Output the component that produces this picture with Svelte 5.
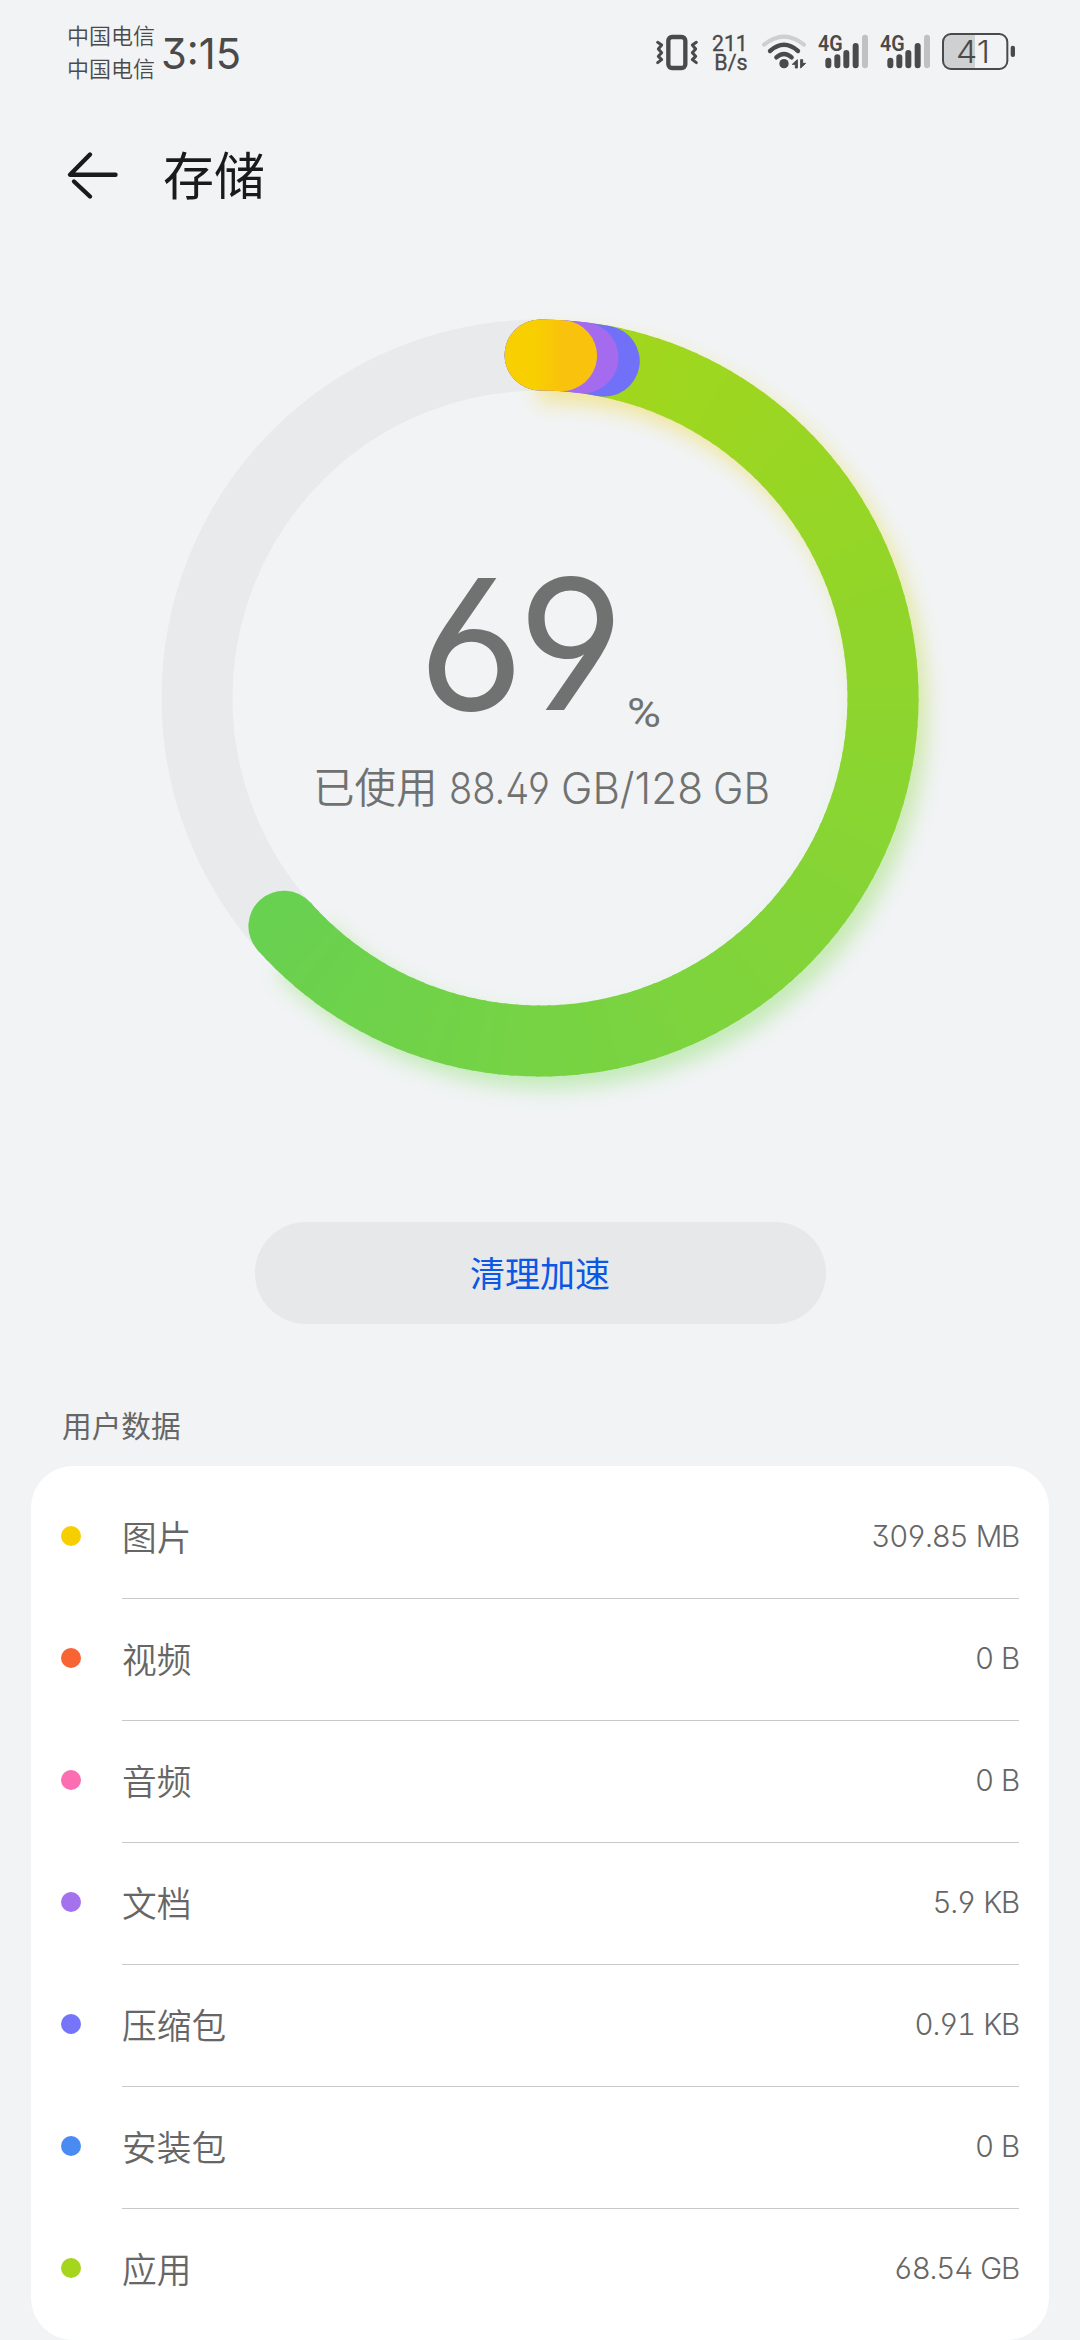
<script>
  const rows = [
    { name: '图片', size: '309.85 MB', color: '#f7ce00' },
    { name: '视频', size: '0 B', color: '#f86433' },
    { name: '音频', size: '0 B', color: '#fb6fb2' },
    { name: '文档', size: '5.9 KB', color: '#a572ee' },
    { name: '压缩包', size: '0.91 KB', color: '#7575f9' },
    { name: '安装包', size: '0 B', color: '#4a8af3' },
    { name: '应用', size: '68.54 GB', color: '#a5d61d' }
  ];

  const CX = 540;
  const CY = 699;
  const R = 343;

  function point(deg) {
    const a = (deg * Math.PI) / 180;
    return `${(CX + R * Math.sin(a)).toFixed(2)} ${(CY - R * Math.cos(a)).toFixed(2)}`;
  }

  function arc(from, to) {
    return `M${point(from)}A${R} ${R} 0 ${to - from > 180 ? 1 : 0} 1 ${point(to)}`;
  }

  // Colour stops of the sweep, by angle clockwise from the top
  const stops = [
    [8, [162, 215, 28]],
    [90, [142, 213, 45]],
    [180, [118, 211, 68]],
    [230, [104, 209, 80]]
  ];

  function sweepColor(deg) {
    let i = 0;
    while (i < stops.length - 2 && deg > stops[i + 1][0]) i++;
    const [a, ca] = stops[i];
    const [b, cb] = stops[i + 1];
    const t = Math.min(1, Math.max(0, (deg - a) / (b - a)));
    return `rgb(${ca.map((v, k) => Math.round(v + (cb[k] - v) * t)).join(',')})`;
  }

  const END = 228.3;
  const slices = [];
  for (let d = 8; d < END; d += 2) {
    slices.push({ d: arc(d, Math.min(END, d + 2.6)), color: sweepColor(d) });
  }
</script>

<div class="screen">
  <header class="status">
    <div class="carriers"><span>中国电信</span><span>中国电信</span></div>
    <div class="clock">
      <svg viewBox="0 0 84 80" width="84" height="80">
        <text x="0" y="59" class="open" font-size="43" textLength="80" lengthAdjust="spacingAndGlyphs">3:15</text>
      </svg>
    </div>
    <div class="icons">
      <svg viewBox="0 0 1200 240" width="400" height="80">
        <g fill="none" stroke="#4a4a4a" stroke-linecap="round" stroke-linejoin="round">
          <rect x="85" y="81" width="51" height="93" rx="11" stroke-width="13" />
          <path d="M53 97L65 105L55 117L65 128L55 139L65 149L53 158" stroke-width="9" />
          <path d="M169 97L157 105L167 117L157 128L167 139L157 149L169 158" stroke-width="9" />
        </g>
        <g class="speed">
          <text x="216" y="122" textLength="107" lengthAdjust="spacingAndGlyphs">211</text>
          <text x="223" y="180" textLength="100" lengthAdjust="spacingAndGlyphs">B/s</text>
        </g>
        <g fill="none" stroke-linecap="round">
          <path d="M372 104Q432 56 492 104" stroke="#cdcfd0" stroke-width="12" />
          <path d="M390 123Q432 86 474 123" stroke="#4a4a4a" stroke-width="13" />
          <path d="M409 142Q432 122 455 142" stroke="#4a4a4a" stroke-width="13" />
        </g>
        <circle cx="432" cy="161" r="14" fill="#4a4a4a" />
        <path d="M457 163L472 149V174H466V163ZM497 160L482 174V149H488V160Z" fill="#4a4a4a" stroke="#4a4a4a" stroke-width="3" stroke-linejoin="round" />
        {#each [0, 186] as dx}
          <g transform="translate({dx} 0)">
            <text x="534" y="123" class="net" textLength="74" lengthAdjust="spacingAndGlyphs">4G</text>
            <g stroke="#4a4a4a" stroke-width="18" stroke-linecap="round">
              <path d="M565 152V166M592 142V166M619 129V166M647 108V166" />
              <path d="M675 83V166" stroke="#c0c1c2" />
            </g>
          </g>
        {/each}
        <path d="M1005 72H933Q910 72 910 95V155Q910 177 933 177H1005Z" fill="#cfd0d2" />
        <rect x="909" y="72" width="193" height="105" rx="24" fill="none" stroke="#4a4a4a" stroke-width="6" />
        <rect x="1112" y="107" width="13" height="34" rx="6" fill="#4a4a4a" />
        <text x="948" y="158" class="level" textLength="102" lengthAdjust="spacingAndGlyphs">41</text>
      </svg>
    </div>
  </header>

  <div class="title-bar">
    <svg viewBox="0 0 56 60" width="56" height="60" fill="none" stroke="#1a1a1a" stroke-width="4.4" stroke-linecap="round" stroke-linejoin="round">
      <path d="M26 9.500L6 29.800H51.500" />
      <path d="M10 36.500L26 51.500" />
    </svg>
    <h1>存储</h1>
  </div>

  <section class="ring">
    <svg viewBox="140 300 820 820" width="820" height="820">
      <defs>
        <linearGradient id="glow" gradientUnits="userSpaceOnUse" x1="0" y1="330" x2="0" y2="1080">
          <stop offset="0" stop-color="#f5d01c" />
          <stop offset="0.28" stop-color="#e2dc20" />
          <stop offset="0.58" stop-color="#98dc50" />
          <stop offset="1" stop-color="#80e064" />
        </linearGradient>
        <linearGradient id="photo" gradientUnits="userSpaceOnUse" x1="535" y1="0" x2="562" y2="0">
          <stop offset="0" stop-color="#f8cf00" />
          <stop offset="1" stop-color="#f9c20c" />
        </linearGradient>
        <filter id="soft" x="-20%" y="-20%" width="140%" height="140%">
          <feGaussianBlur stdDeviation="10" />
        </filter>
      </defs>
      <g fill="none" stroke-width="71">
        <circle cx={CX} cy={CY} r={R} stroke="#e9eaeb" />
        <path d={arc(-2, 226)} stroke="url(#glow)" opacity="0.42" filter="url(#soft)" transform="translate(9 12)" />
        <path d={arc(END - 0.5, END)} stroke={sweepColor(END)} stroke-linecap="round" />
        {#each slices as s}
          <path d={s.d} stroke={s.color} />
        {/each}
        <path d={arc(0, 10.8)} stroke="#7070f8" stroke-linecap="round" />
        <path d={arc(0, 7.2)} stroke="#a56bee" stroke-linecap="round" />
        <path d={arc(0, 3.6)} stroke="url(#photo)" stroke-linecap="round" />
      </g>
      <g fill="#707271">
        <text x="418" y="711" class="open" font-size="182" textLength="206" lengthAdjust="spacingAndGlyphs">69</text>
        <text x="627" y="728" class="percent" textLength="34" lengthAdjust="spacingAndGlyphs">%</text>
        <text x="313" y="804" class="cjk" font-size="41.500">已使用</text>
        <g class="open thin" font-size="43">
          <text x="449" y="805" textLength="101" lengthAdjust="spacingAndGlyphs">88.49</text>
          <text x="561" y="805" textLength="142" lengthAdjust="spacingAndGlyphs">GB/128</text>
          <text x="713" y="805" textLength="57" lengthAdjust="spacingAndGlyphs">GB</text>
        </g>
      </g>
    </svg>
  </section>

  <button class="clean">清理加速</button>

  <h2>用户数据</h2>
  <ul class="card">
    {#each rows as row}
      <li>
        <i style="background:{row.color}"></i>
        <div class="line">
          <span class="name">{row.name}</span>
          <span class="size">{row.size}</span>
        </div>
      </li>
    {/each}
  </ul>
</div>

<style>
  :global(body) {
    background: #f1f3f5;
  }
  .screen {
    width: 1080px;
    height: 2340px;
    overflow: hidden;
    background: #f1f3f5;
    display: flex;
    flex-direction: column;
    font-family: Inter, 'Noto Sans CJK SC', sans-serif;
    box-sizing: border-box;
  }
  .status {
    height: 100px;
    display: flex;
    align-items: flex-start;
    padding: 10px 40px 0 67px;
    box-sizing: border-box;
    color: #4a4a4a;
  }
  .carriers {
    display: flex;
    flex-direction: column;
    font: 350 22px/33px 'Noto Sans CJK SC', sans-serif;
    padding-top: 8px;
    width: 94px;
  }
  .clock {
    fill: #4a4a4a;
  }
  .icons {
    margin-left: auto;
  }
  svg {
    display: block;
  }
  .open {
    font-family: Inter, sans-serif;
    font-feature-settings: 'ss01' 1;
  }
  .thin {
    font-weight: 300;
  }
  .percent {
    font: 400 41px Roboto, sans-serif;
  }
  .cjk {
    font-family: 'Noto Sans CJK SC', sans-serif;
    font-weight: 350;
  }
  .speed {
    font: 400 67px Roboto, sans-serif;
    fill: #4a4a4a;
    stroke: #4a4a4a;
    stroke-width: 1px;
  }
  .net {
    font: 600 66px Roboto, sans-serif;
    fill: #4a4a4a;
  }
  .level {
    font: 300 94px Inter, sans-serif;
    fill: #4a4a4a;
  }
  .title-bar {
    height: 150px;
    display: flex;
    align-items: center;
    gap: 43px;
    padding-left: 64px;
  }
  h1 {
    margin: -3px 0 0;
    font: 400 51px/60px 'Noto Sans CJK SC', sans-serif;
    color: #1a1a1a;
  }
  .ring {
    margin: 50px 0 0 140px;
  }
  .clean {
    align-self: center;
    width: 571px;
    height: 102px;
    margin: 103px 0 0;
    padding: 0 0 2px;
    border: 0;
    border-radius: 51px;
    background: #e6e8e9;
    color: #0c57e4;
    font: 400 35px/50px 'Noto Sans CJK SC', sans-serif;
  }
  h2 {
    margin: 71px 0 11px 62px;
    font: 400 29.700px/60px 'Noto Sans CJK SC', sans-serif;
    color: #666;
  }
  .card {
    list-style: none;
    margin: 0 31px;
    padding: 11px 30px 9px;
    border-radius: 42px;
    background: #fff;
    flex: none;
  }
  li {
    display: flex;
    height: 122px;
    align-items: center;
  }
  i {
    width: 20px;
    height: 20px;
    border-radius: 50%;
    margin: -4px 41px 0 0;
    flex: none;
  }
  .line {
    flex: 1;
    height: 122px;
    box-sizing: border-box;
    border-bottom: 1px solid #c9c9c9;
    padding-bottom: 3px;
    display: flex;
    align-items: center;
    justify-content: space-between;
    color: #666;
  }
  li:last-child .line {
    border-bottom-color: transparent;
  }
  .name {
    font: 350 34.700px/50px 'Noto Sans CJK SC', sans-serif;
  }
  .size {
    font: 300 29.500px/40px Inter, sans-serif;
    font-feature-settings: 'ss01' 1, 'tnum' 1;
    font-kerning: none;
    letter-spacing: -1.2px;
    word-spacing: 1.5px;
    margin-right: 0;
  }
</style>
